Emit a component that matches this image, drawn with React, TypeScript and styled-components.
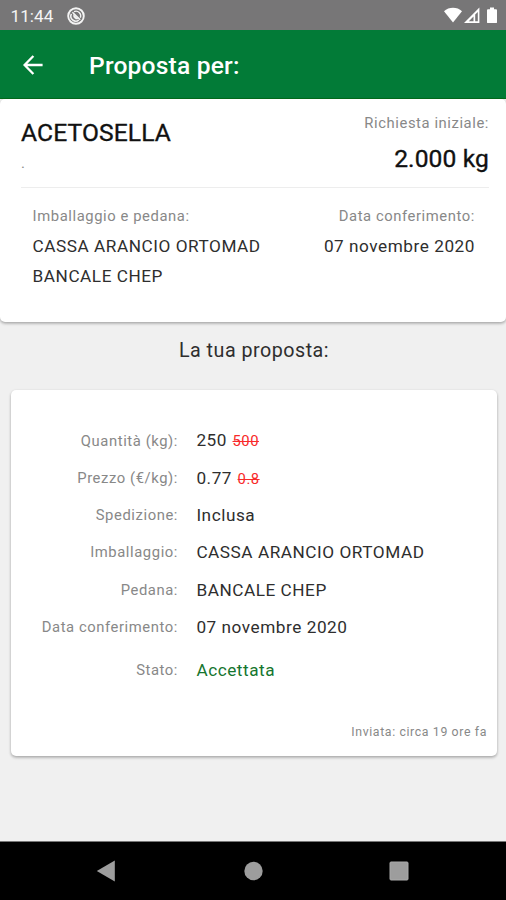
import React from "react";
import styled, { createGlobalStyle } from "styled-components";

const GlobalStyle = createGlobalStyle`
  * { box-sizing: border-box; }
  body { margin: 0; background: #f0f0f0; font-family: Roboto, sans-serif; }
`;

const Screen = styled.div`
  display: flex;
  flex-direction: column;
  width: 506px;
  height: 900px;
  overflow: hidden;
  background: #f0f0f0;
  color: #2e2e2e;
`;

const StatusBar = styled.div`
  display: flex;
  align-items: center;
  flex: none;
  height: 30px;
  padding: 1px 8px 0 10.5px;
  background: #777677;
  color: #f4f4f4;
  font-size: 17.2px;
`;

const NotificationIcon = styled.svg`
  margin-left: 13.5px;
`;

const StatusIcons = styled.div`
  display: flex;
  align-items: center;
  margin-left: auto;
`;

const AppBar = styled.header`
  display: flex;
  align-items: center;
  flex: none;
  height: 69px;
  padding: 0 21px;
  background: #027b37;
  border-bottom: 1px solid #046c1c;
  color: #fff;
`;

const BackButton = styled.button`
  display: flex;
  margin: 1px 44px 0 0;
  padding: 0;
  border: 0;
  background: none;
  color: inherit;
`;

const Title = styled.h1`
  margin: 3px 0 0;
  font-size: 24.6px;
  font-weight: 500;
  letter-spacing: 0.18px;
`;

const Card = styled.section`
  background: #fff;
  border-radius: 5px;
  box-shadow: 0 1px 3px rgba(0, 0, 0, 0.2), 0 2px 3px rgba(0, 0, 0, 0.14);
`;

const RequestCard = styled(Card)`
  flex: none;
  height: 222.5px;
  padding: 0 17px 0 21px;
`;

const Summary = styled.div`
  display: flex;
  justify-content: space-between;
  height: 89px;
  border-bottom: 1px solid #ededed;
`;

const Product = styled.div`
  padding-top: 19px;
`;

const Requested = styled.div`
  padding-top: 14px;
  text-align: right;
`;

const Headline = styled.div`
  font-size: 24.6px;
  font-weight: 400;
  line-height: 30px;
  letter-spacing: 0.12px;
  color: #111;
  -webkit-text-stroke: 0.35px #111;
`;

const Label = styled.div<{ $line?: number }>`
  font-size: 14.8px;
  letter-spacing: 0.58px;
  line-height: ${(p) => p.$line ?? 30}px;
  color: #888;
`;

const Value = styled.div<{ $color?: string }>`
  font-size: 17.2px;
  letter-spacing: 0.54px;
  line-height: 30px;
  color: ${(p) => p.$color ?? "#2e2e2e"};
`;

const Amount = styled(Headline)`
  margin-top: 11px;
`;

const Details = styled.div`
  display: flex;
  justify-content: space-between;
  padding: 12.5px 14px 0 11.6px;
`;

const DateColumn = styled.div`
  text-align: right;
`;

const SectionTitle = styled.h2`
  margin: 0;
  height: 68.5px;
  padding-left: 2px;
  font-size: 19.7px;
  font-weight: 400;
  letter-spacing: 0.5px;
  line-height: 57px;
  text-align: center;
`;

const ProposalCard = styled(Card)`
  flex: none;
  height: 366px;
  margin: 0 9px 0 11px;
  padding: 32.4px 10px 0 0;
`;

const Field = styled.div<{ $gap?: number }>`
  display: grid;
  grid-template-columns: 167px 1fr;
  column-gap: 18.4px;
  align-items: center;
  height: 37.15px;
  margin-top: ${(p) => p.$gap ?? 0}px;
`;

const FieldLabel = styled(Label)`
  text-align: right;
`;

const OldValue = styled.s`
  margin-left: 5.5px;
  font-size: 14.8px;
  letter-spacing: 0.5px;
  color: #f82a2a;
`;

const SentAt = styled.div`
  margin-top: 35px;
  font-size: 12.3px;
  letter-spacing: 0.63px;
  line-height: 18px;
  text-align: right;
  color: #888;
`;

const NavBar = styled.nav`
  display: grid;
  grid-template-columns: repeat(3, 146px);
  justify-content: center;
  justify-items: center;
  align-items: center;
  flex: none;
  height: 59px;
  margin-top: auto;
  border-top: 1px solid #777;
  background: #000;
`;

const fields: { label: string; value: string; old?: string }[] = [
  { label: "Quantità (kg):", value: "250", old: "500" },
  { label: "Prezzo (€/kg):", value: "0.77", old: "0.8" },
  { label: "Spedizione:", value: "Inclusa" },
  { label: "Imballaggio:", value: "CASSA ARANCIO ORTOMAD" },
  { label: "Pedana:", value: "BANCALE CHEP" },
  { label: "Data conferimento:", value: "07 novembre 2020" },
];

export default function App() {
  return (
    <Screen>
      <GlobalStyle />
      <StatusBar>
        <span>11:44</span>
        <NotificationIcon width="18" height="18" viewBox="0 0 18 18" fill="none" stroke="#f4f4f4">
          <circle cx="9" cy="9" r="7.8" strokeWidth="1.9" />
          <path d="M4.4 6.8a5 5 0 0 0 7.4 6.3" strokeWidth="1.5" />
          <path d="M7 4.6a4.8 4.8 0 0 1 6.4 6.1" strokeWidth="1.3" />
          <path d="M5.4 5.2l7.8 7.6" strokeWidth="1.6" />
          <path d="M6.6 7.6l4.6 4.2c-2.6 1-5.2-1-4.6-4.2z" fill="#f4f4f4" strokeWidth="0.6" />
        </NotificationIcon>
        <StatusIcons>
          <svg width="54" height="18" viewBox="0 0 54 18" fill="#fff">
            <path d="M0 4.2C4.9-.3 13.1-.3 18 4.2L9 15.5z" />
            <path fillRule="evenodd" d="M20 16L35.4.6V16zM24.8 14.2h4.7V9.4z M31.2 7.4v6.8h2.6V5z" />
            <path d="M46 .5h4v1.8h2.1c.5 0 .9.4.9.9v12c0 .5-.4.9-.9.9h-8.2a.9.9 0 0 1-.9-.9v-12c0-.5.4-.9.9-.9H46z" />
          </svg>
        </StatusIcons>
      </StatusBar>
      <AppBar>
        <BackButton aria-label="Indietro">
          <svg width="24" height="24" viewBox="0 0 24 24" fill="none" stroke="currentColor" strokeWidth="2.3">
            <path d="M12.4 3L3.6 12l8.8 9M3 12h18.6" />
          </svg>
        </BackButton>
        <Title>Proposta per:</Title>
      </AppBar>
      <RequestCard>
        <Summary>
          <Product>
            <Headline>ACETOSELLA</Headline>
            <Label>.</Label>
          </Product>
          <Requested>
            <Label $line={20}>Richiesta iniziale:</Label>
            <Amount>2.000 kg</Amount>
          </Requested>
        </Summary>
        <Details>
          <div>
            <Label>Imballaggio e pedana:</Label>
            <Value>CASSA ARANCIO ORTOMAD</Value>
            <Value>BANCALE CHEP</Value>
          </div>
          <DateColumn>
            <Label>Data conferimento:</Label>
            <Value>07 novembre 2020</Value>
          </DateColumn>
        </Details>
      </RequestCard>
      <SectionTitle>La tua proposta:</SectionTitle>
      <ProposalCard>
        {fields.map((f) => (
          <Field key={f.label}>
            <FieldLabel>{f.label}</FieldLabel>
            <Value>
              {f.value}
              {f.old && <OldValue>{f.old}</OldValue>}
            </Value>
          </Field>
        ))}
        <Field $gap={6}>
          <FieldLabel>Stato:</FieldLabel>
          <Value $color="#15762f">Accettata</Value>
        </Field>
        <SentAt>Inviata: circa 19 ore fa</SentAt>
      </ProposalCard>
      <NavBar>
        <svg width="22" height="22" viewBox="0 0 22 22" fill="#9d9d9d">
          <path d="M.8 11L18.8.4v21.2z" />
        </svg>
        <svg width="20" height="20" viewBox="0 0 20 20" fill="#9d9d9d">
          <circle cx="10.5" cy="10" r="9.2" />
        </svg>
        <svg width="20" height="20" viewBox="0 0 20 20" fill="#9d9d9d" stroke="#aaa">
          <rect x="1" y="1" width="18" height="18" rx="1" />
        </svg>
      </NavBar>
    </Screen>
  );
}
